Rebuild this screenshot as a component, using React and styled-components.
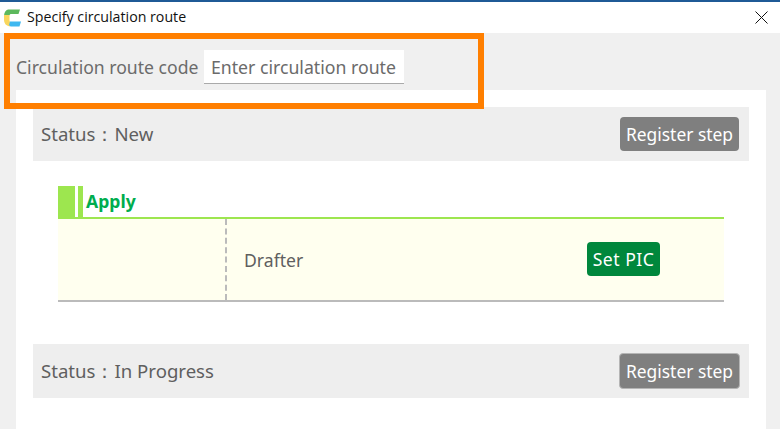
import React from 'react';
import styled, { createGlobalStyle } from 'styled-components';

const GlobalStyle = createGlobalStyle`
  html, body {
    margin: 0;
    padding: 0;
    background: #fff;
  }
  body {
    font-family: "Noto Sans", "Open Sans", sans-serif;
    color: #555;
  }
`;

const Dialog = styled.div`
  position: relative;
  width: 780px;
  height: 429px;
  overflow: hidden;
  border-top: 2px solid #1f5a96;
  box-sizing: border-box;
  background: #fff;
`;

const TitleBar = styled.div`
  height: 31px;
  display: flex;
  align-items: center;
  padding: 0 12px 0 3px;
  gap: 6px;
`;

const TitleText = styled.div`
  flex: 1;
  margin-top: -2px;
  font-family: "Open Sans", sans-serif;
  font-size: 14.200px;
  color: #111;
`;

const Body = styled.div`
  height: 396px;
  background: #f0f0f0;
  padding: 17px 14px 0 16px;
  box-sizing: border-box;
`;

const CodeRow = styled.div`
  display: flex;
  align-items: center;
  gap: 6px;
  height: 34px;
  margin-bottom: 6px;
`;

const Label = styled.label`
  font-size: 17.600px;
  color: #6b6b6b;
`;

const Input = styled.div`
  width: 200px;
  height: 34px;
  box-sizing: border-box;
  padding-left: 6.500px;
  display: flex;
  align-items: center;
  background: #fff;
  border-bottom: 1px solid #aaa;
  font-size: 17.700px;
  color: #6b6b6b;
`;

const Panel = styled.div`
  background: #fff;
  height: 340px;
  padding: 17px 17px 0;
`;

const StatusBar = styled.div`
  height: 54px;
  display: flex;
  align-items: center;
  justify-content: space-between;
  padding: 0 10px 0 8px;
  background: #eee;
`;

const StatusText = styled.div`
  font-size: 18.600px;
  color: #5f5f5f;
`;

const GreyButton = styled.button`
  height: ${p => (p.$focused ? 36 : 34)}px;
  width: ${p => (p.$focused ? 121 : 119)}px;
  margin-right: ${p => (p.$focused ? -1 : 0)}px;
  padding: 0;
  border: ${p => (p.$focused ? '1px solid #b5b5b5' : 'none')};
  border-radius: 4px;
  background: #7f7f7f;
  color: #fff;
  font-family: inherit;
  font-size: 17.400px;
`;

const Step = styled.div`
  margin: 25px 25px 42px;
`;

const StepHeader = styled.div`
  height: 31px;
  display: flex;
  border-bottom: 2px solid #9de64f;
`;

const StepBlock = styled.div`
  width: 17px;
  background: #9de64f;
`;

const StepName = styled.div`
  margin-left: 3px;
  padding-left: 3px;
  border-left: 5px solid #9de64f;
  font-size: 17.600px;
  font-weight: 700;
  line-height: 31px;
  color: #00ad4e;
`;

const StepRow = styled.div`
  height: 81px;
  display: flex;
  align-items: center;
  background: #ffffef;
  border-bottom: 2px solid #bbb;
`;

const RoleCell = styled.div`
  align-self: stretch;
  width: 167px;
  border-right: 2px dashed #bbb;
`;

const RoleName = styled.div`
  width: 343px;
  padding-left: 17px;
  font-size: 17.600px;
  color: #5f5f5f;
`;

const PicButton = styled.button`
  width: 73px;
  height: 34px;
  margin-bottom: 1px;
  padding: 0;
  border: none;
  border-radius: 4px;
  background: #00873c;
  color: #fff;
  font-family: inherit;
  font-size: 17.600px;
  letter-spacing: 0.500px;
`;

const Highlight = styled.div`
  position: absolute;
  left: 4px;
  top: 31px;
  width: 480px;
  height: 76px;
  border: 6px solid #ff7f00;
  box-sizing: border-box;
`;

const Logo = () => (
  <svg width="18" height="18" viewBox="0 0 18 18">
    <path d="M5 0.500h12l-1.500 4.500H7.500L6 6.500H1Q1.500 1.500 5 0.500z" fill="#5cb85c" />
    <path d="M1 6h5.500v6l2 3-2 2.500Q1 16 1 11z" fill="#f9d65c" />
    <path d="M7 12.500h11l-1.500 5H7.500L6 16z" fill="#3fb8f0" />
  </svg>
);

const CloseIcon = () => (
  <svg width="13" height="13" viewBox="0 0 13 13">
    <path d="M.5.500l12 12M12.500.500l-12 12" stroke="#111" strokeWidth="1" fill="none" />
  </svg>
);

export default function App() {
  return (
    <>
      <GlobalStyle />
      <Dialog>
        <TitleBar>
          <Logo />
          <TitleText>Specify circulation route</TitleText>
          <CloseIcon />
        </TitleBar>
        <Body>
          <CodeRow>
            <Label>Circulation route code</Label>
            <Input>Enter circulation route</Input>
          </CodeRow>
          <Panel>
            <StatusBar>
              <StatusText>Status：New</StatusText>
              <GreyButton>Register step</GreyButton>
            </StatusBar>
            <Step>
              <StepHeader>
                <StepBlock />
                <StepName>Apply</StepName>
              </StepHeader>
              <StepRow>
                <RoleCell />
                <RoleName>Drafter</RoleName>
                <PicButton>Set PIC</PicButton>
              </StepRow>
            </Step>
            <StatusBar>
              <StatusText>Status：In Progress</StatusText>
              <GreyButton $focused>Register step</GreyButton>
            </StatusBar>
          </Panel>
        </Body>
        <Highlight />
      </Dialog>
    </>
  );
}
